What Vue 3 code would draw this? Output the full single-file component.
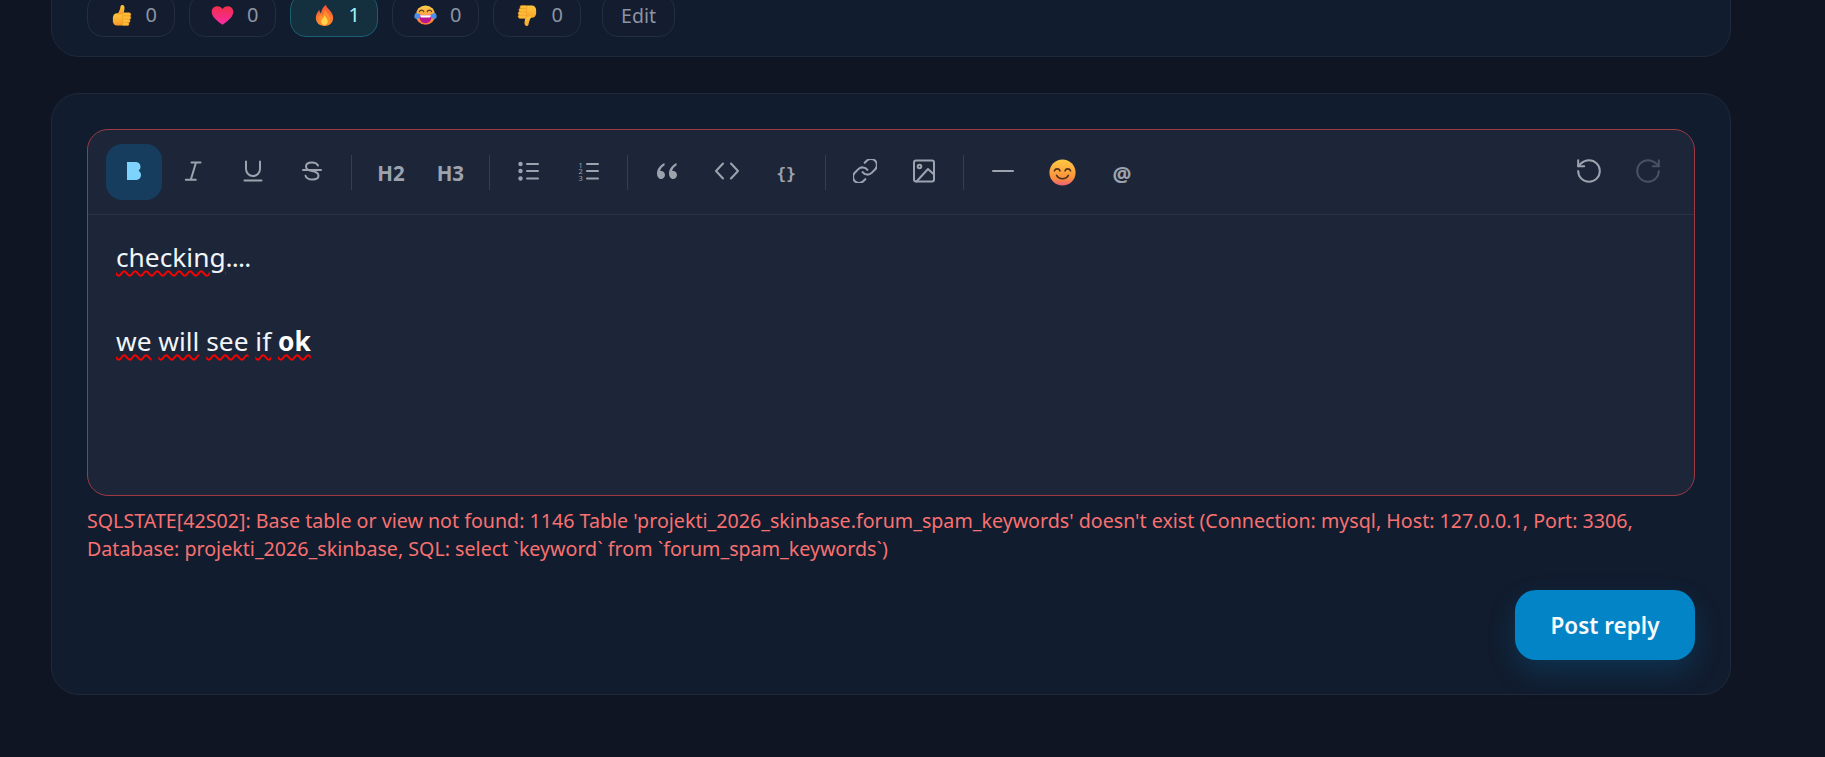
<script setup>
const reactions = [
  { id: 'up', count: 0 },
  { id: 'heart', count: 0 },
  { id: 'fire', count: 1, active: true },
  { id: 'joy', count: 0 },
  { id: 'down', count: 0 },
]
</script>

<template>
  <div class="page">
    <svg class="defs" aria-hidden="true">
      <defs>
        <linearGradient id="skin" x1="0" y1="0" x2="0" y2="1"><stop offset="0" stop-color="#ffc83d"/><stop offset="1" stop-color="#f59a26"/></linearGradient>
        <linearGradient id="skinDown" x1="0" y1="1" x2="0" y2="0"><stop offset="0" stop-color="#ffc83d"/><stop offset="1" stop-color="#f7a52c"/></linearGradient>
        <linearGradient id="heartg" x1="0" y1="0" x2="0" y2="1"><stop offset="0" stop-color="#ee3049"/><stop offset="1" stop-color="#fb2aa6"/></linearGradient>
        <linearGradient id="fireg" x1="0" y1="0" x2="0" y2="1"><stop offset="0" stop-color="#f2503a"/><stop offset="1" stop-color="#ff8f2b"/></linearGradient>
        <linearGradient id="faceg" x1="0" y1="0" x2="0" y2="1"><stop offset="0" stop-color="#ffd04a"/><stop offset="1" stop-color="#f9743c"/></linearGradient>
        <linearGradient id="smileg" x1="0" y1="0" x2="0" y2="1"><stop offset="0" stop-color="#ffca42"/><stop offset=".72" stop-color="#fb8f3c"/><stop offset="1" stop-color="#e9607a"/></linearGradient>
      </defs>
    </svg>

    <section class="card top-card">
      <div class="reactions">
        <button v-for="r in reactions" :key="r.id" class="pill" :class="{ active: r.active }">
          <svg class="emoji" viewBox="0 0 32 32">
            <g v-if="r.id === 'up' || r.id === 'down'" :transform="r.id === 'down' ? 'rotate(180 16 16)' : null">
              <rect x="4" y="13" width="19" height="17" rx="6" :fill="r.id === 'up' ? 'url(#skin)' : 'url(#skinDown)'"/>
              <path d="M10 15c2.500-4 4-7.500 4.500-11 .3-1.800 1.600-3 3.300-2.500 2.200.7 2.700 3 2.200 6L19 14z" :fill="r.id === 'up' ? 'url(#skin)' : 'url(#skinDown)'"/>
              <g fill="#ffbe38" stroke="#e98e20" stroke-width=".7">
                <rect x="17" y="12" width="12" height="5" rx="2.500"/>
                <rect x="17" y="16.500" width="12" height="5" rx="2.500"/>
                <rect x="17" y="21" width="11" height="5" rx="2.500"/>
                <rect x="17" y="25.500" width="9.500" height="4.500" rx="2.200"/>
              </g>
            </g>
            <path v-else-if="r.id === 'heart'" d="M16 29C6 22 1 17 1 10.500 1 6 4.500 3 9 3c3 0 5.500 1.500 7 4 1.500-2.500 4-4 7-4 4.500 0 8 3 8 7.500C31 17 26 22 16 29z" fill="url(#heartg)"/>
            <g v-else-if="r.id === 'fire'">
              <path d="M18 1c.5 5 10 9 10 18 0 7-5 11.500-12 11.500S4 26 4 19.500c0-5 2.500-8.500 5-11.500 0 2.500.7 4 2 5 .5-4 3-9 7-12z" fill="url(#fireg)"/>
              <path d="M17 8c1 4 7 7 7 13 0 5-3.500 8.500-8 8.500S8 26 8 21c0-3 1.500-5 3-7 .5 2 1.500 3 2.500 3.500C14 14 15 11 17 8z" fill="#ff8d2a"/>
              <path d="M16.500 16c1 3 4 4.500 4 8.500 0 3-2 5-4.500 5s-4.500-2-4.500-5c0-4 3.500-5 5-8.500z" fill="#ffd54a"/>
            </g>
            <g v-else-if="r.id === 'joy'">
              <circle cx="16" cy="15.500" r="13.500" fill="url(#faceg)"/>
              <path d="M7 14.500c3 1.200 15 1.200 18 0 0 8-3.500 12-9 12s-9-4-9-12z" fill="#b8158f"/>
              <path d="M8.500 15.300c3 .7 12 .7 15 0-.1 1.300-.3 2.200-.6 3-3 .6-10.800.6-13.800 0-.3-.8-.5-1.700-.6-3z" fill="#fff"/>
              <path d="M7.500 10.500c1.200-2.500 4.800-2.500 6 0M18.500 10.500c1.200-2.500 4.800-2.500 6 0" fill="none" stroke="#5b3a22" stroke-width="1.800" stroke-linecap="round"/>
              <path d="M2.500 12.500c2.500.3 5.500 1.500 6.500 4-.7 4-5.500 5.500-8 3-1.200-2.200-.3-5.300 1.500-7zM29.500 12.500c-2.500.3-5.500 1.500-6.500 4 .7 4 5.500 5.500 8 3 1.200-2.200.3-5.300-1.500-7z" fill="#4a8ff0"/>
            </g>
          </svg>
          <span class="count">{{ r.count }}</span>
        </button>
        <button class="pill edit">Edit</button>
      </div>
    </section>

    <section class="card reply-card">
      <div class="editor">
        <div class="toolbar">
          <button class="tool on">
            <svg viewBox="0 0 24 24"><path d="M5 3h8c3.500 0 5.500 2 5.500 4.800 0 1.700-.8 3-2 3.900 1.600.8 2.500 2.300 2.500 4.300 0 3-2.300 5-5.800 5H5z" fill="#7dd3fc"/></svg>
          </button>
          <button class="tool"><svg viewBox="0 0 24 24"><path d="M10.500 3.500h9M4.800 20.800h10M15 3.500 9.800 20.800"/></svg></button>
          <button class="tool"><svg viewBox="0 0 24 24"><path d="M5 2.500V10a7 7 0 0 0 14 0V2.500M3.500 21.500h17"/></svg></button>
          <button class="tool"><svg viewBox="0 0 24 24"><path d="M18 6.500C17 4.500 15 3.500 12 3.500 8.500 3.500 6 5 6 7.500c0 3 3 4 6 4.500 3.500.6 6.500 1.500 6.500 4.800 0 2.200-2.500 3.700-6.200 3.700-3.500 0-6-1.400-6.800-3.800M3 11h18"/></svg></button>
          <span class="sep"></span>
          <button class="tool word">H2</button>
          <button class="tool word">H3</button>
          <span class="sep"></span>
          <button class="tool"><svg viewBox="0 0 24 24"><path d="M10 5h11M10 12h11M10 19.500h11"/><circle cx="3.500" cy="5" r="2.200" class="fill"/><circle cx="3.500" cy="12" r="2.200" class="fill"/><circle cx="3.500" cy="19.500" r="2.200" class="fill"/></svg></button>
          <button class="tool"><svg viewBox="0 0 24 24"><path d="M10 5h11M10 12h11M10 19.500h11"/><text x="1.400" y="8.500" class="mini">1</text><text x="1.400" y="15" class="mini">2</text><text x="1.400" y="21.500" class="mini">3</text></svg></button>
          <span class="sep"></span>
          <button class="tool"><svg viewBox="0 0 24 24"><path class="fill" d="M9.500 4C5.500 6 2 9.500 2 14.500 2 17.500 3.800 20 6 20s4-1.800 4-4-1.600-4-3.800-4c-.4 0-.8 0-1 .1.400-2.400 2-4.500 4.300-5.600zM21.500 4c-4 2-7.500 5.500-7.500 10.500 0 3 1.800 5.500 4 5.500s4-1.800 4-4-1.600-4-3.800-4c-.4 0-.8 0-1 .1.400-2.400 2-4.500 4.300-5.600z"/></svg></button>
          <button class="tool"><svg viewBox="0 0 24 24"><path d="M8 4.500 1 12l7 7.500M16 4.500l7 7.500-7 7.500"/></svg></button>
          <button class="tool word mono">{}</button>
          <span class="sep"></span>
          <button class="tool"><svg class="thin" viewBox="2 2 20 20"><path d="M10 13a5 5 0 0 0 7.540.54l3-3a5 5 0 0 0-7.070-7.070l-1.720 1.710M14 11a5 5 0 0 0-7.540-.54l-3 3a5 5 0 0 0 7.070 7.070l1.710-1.710"/></svg></button>
          <button class="tool"><svg viewBox="0 0 24 24"><rect x="2" y="1.500" width="20" height="21" rx="2"/><circle cx="7.500" cy="7.500" r="1.800"/><path d="M22 15.500 16 10 4.500 22.500"/></svg></button>
          <span class="sep"></span>
          <button class="tool"><svg viewBox="0 0 24 24"><path d="M2 12h20"/></svg></button>
          <button class="tool">
            <svg class="smile" viewBox="0 0 32 32">
              <circle cx="16" cy="16" r="15.500" fill="url(#smileg)"/>
              <path d="M6.500 14c1.200-3 5.300-3 6.500 0M19 14c1.200-3 5.300-3 6.500 0M9 19.500c3 5.300 11 5.300 14 0" fill="none" stroke="#4a2e1c" stroke-width="1.900" stroke-linecap="round"/>
            </svg>
          </button>
          <button class="tool word at">@</button>
          <span class="grow"></span>
          <button class="tool"><svg class="thin" viewBox="2 2 20 20"><path d="M3 12a9 9 0 1 0 9-9 9.750 9.750 0 0 0-6.740 2.740L3 8"/><path d="M3 3v5h5"/></svg></button>
          <button class="tool off"><svg class="thin" viewBox="2 2 20 20"><path d="M21 12a9 9 0 1 1-9-9c2.520 0 4.930 1 6.740 2.740L21 8"/><path d="M21 3v5h-5"/></svg></button>
        </div>
        <div class="body">
          <p><span class="sp">checking</span><span class="dots">....</span></p>
          <p>&nbsp;</p>
          <p><span class="sp">we</span> <span class="sp">will</span> <span class="sp">see</span> <span class="sp">if</span> <b class="sp">ok</b></p>
        </div>
      </div>
      <p class="error">SQLSTATE[42S02]: Base table or view not found: 1146 Table 'projekti_2026_skinbase.forum_spam_keywords' doesn't exist (Connection: mysql, Host: 127.0.0.1, Port: 3306, Database: projekti_2026_skinbase, SQL: select `keyword` from `forum_spam_keywords`)</p>
      <div class="actions">
        <button class="post">Post reply</button>
      </div>
    </section>
  </div>
</template>

<style>
html, body { margin: 0; background: #0f1522; overflow: hidden; }
</style>

<style scoped>
.page {
  height: 757px;
  overflow: hidden;
  box-sizing: border-box;
  padding: 0 94px 0 51px;
  font-family: "Noto Sans", "Open Sans", sans-serif;
  background: #0f1522;
}
.defs { display: block; width: 0; height: 0; }
button { font-family: inherit; cursor: pointer; padding: 0; }
.card {
  box-sizing: border-box;
  background: #111c2e;
  border: 1px solid #1e2a3b;
  border-radius: 28px;
}
.top-card {
  height: 100px;
  margin-top: -43px;
  padding: 35px 35px 0;
}
.reactions { display: flex; gap: 14px; }
.pill {
  box-sizing: border-box;
  width: 87.500px;
  height: 44px;
  padding-left: 5px;
  display: flex;
  align-items: center;
  justify-content: center;
  gap: 13px;
  background: #131d2f;
  border: 1px solid #232e40;
  border-radius: 16px;
  color: #8c94a3;
  font-size: 20px;
}
.pill.active { background: #14303f; border-color: #1b5d73; color: #a5f3fc; }
.pill.edit { width: 73px; margin-left: 7.500px; padding-left: 0; font-size: 19.500px; }
.emoji { width: 23px; height: 23px; flex: none; }
.count { line-height: 1; }
.reply-card {
  margin-top: 36px;
  height: 602px;
  padding: 35px;
}
.editor {
  height: 367px;
  box-sizing: border-box;
  background: #1c2638;
  border: 1px solid #9c3a44;
  border-radius: 21px;
  overflow: hidden;
}
.toolbar {
  box-sizing: border-box;
  height: 85px;
  padding: 14px 18px;
  display: flex;
  align-items: center;
  gap: 3.400px;
  border-bottom: 1px solid #2a3345;
}
.tool {
  flex: none;
  width: 56px;
  height: 56px;
  display: flex;
  align-items: center;
  justify-content: center;
  background: none;
  border: 0;
  border-radius: 16px;
  color: #9ca3af;
}
.tool svg {
  width: 24px;
  height: 24px;
  fill: none;
  stroke: currentColor;
  stroke-width: 2;
  stroke-linecap: round;
  stroke-linejoin: round;
  transform: translateY(-1px);
}
.tool svg.thin { stroke-width: 1.700; }
.tool .fill { fill: currentColor; stroke: none; }
.tool .mini { font-size: 7.500px; fill: currentColor; stroke: none; font-family: "Noto Sans", sans-serif; }
.tool svg.smile { width: 27px; height: 27px; stroke: none; transform: none; }
.tool.on { background: #163d5e; }
.tool.on svg { stroke: none; }
.tool.off { color: #485162; }
.word { font-size: 20.500px; font-weight: 700; padding-top: 2px; }
.mono { font-family: "DejaVu Sans Mono", monospace; font-size: 16.500px; font-weight: 700; }
.at { font-size: 21px; padding-top: 4px; }
.sep { flex: none; width: 1px; height: 35px; margin: 0 7.500px; background: #353e4f; }
.grow { flex: 1; }
.body {
  padding: 21px 28px;
  color: #f1f5f9;
  font-size: 26.300px;
  line-height: 42px;
}
.body p { margin: 0; }
.sp { text-decoration: underline wavy #ff0000 1.500px; text-underline-offset: 3px; }
.dots { letter-spacing: -.8px; }
.body b { color: #fff; }
.error {
  margin: 11px 0 0;
  color: #f87171;
  font-size: 19.650px;
  line-height: 28px;
}
.actions { display: flex; justify-content: flex-end; margin-top: 27px; }
.post {
  width: 180px;
  height: 70px;
  border: 0;
  border-radius: 21px;
  background: #0284c7;
  color: #f8fafc;
  font-size: 22.500px;
  font-weight: 600;
  box-shadow: 0 12px 28px rgba(2, 132, 199, .22);
}
</style>
